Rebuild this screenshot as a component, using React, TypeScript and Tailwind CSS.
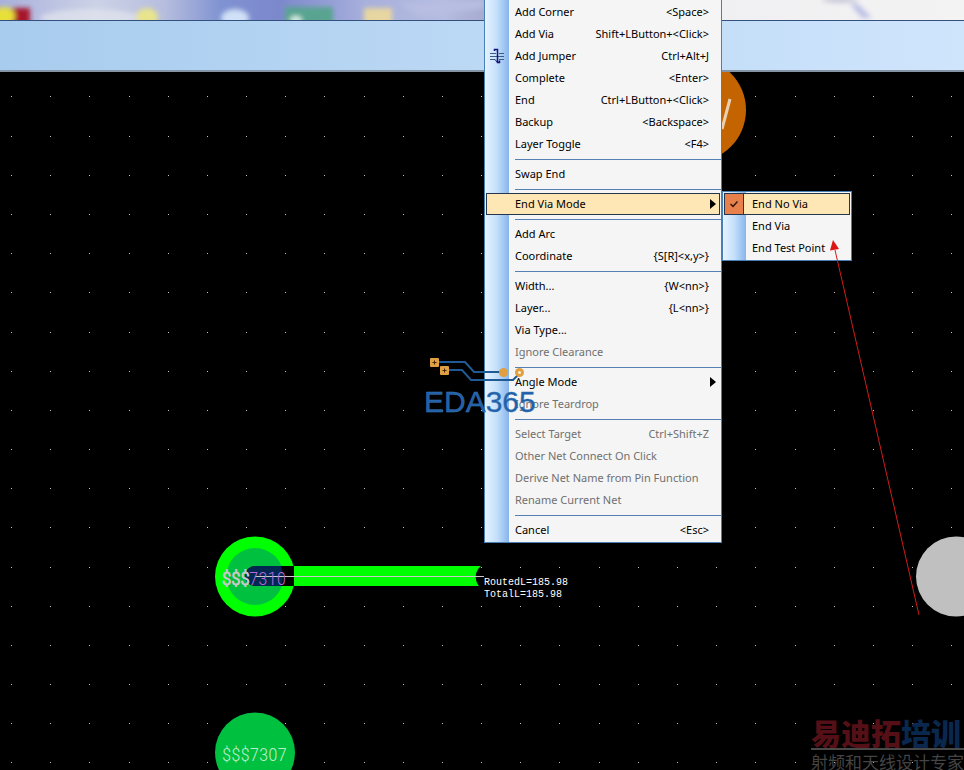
import { useState } from "react";

type MenuEntry = {
  label: string;
  shortcut?: string;
  disabled?: boolean;
  submenu?: boolean;
  icon?: "jumper";
};

const menuGroups: MenuEntry[][] = [
  [
    { label: "Add Corner", shortcut: "<Space>" },
    { label: "Add Via", shortcut: "Shift+LButton+<Click>" },
    { label: "Add Jumper", shortcut: "Ctrl+Alt+J", icon: "jumper" },
    { label: "Complete", shortcut: "<Enter>" },
    { label: "End", shortcut: "Ctrl+LButton+<Click>" },
    { label: "Backup", shortcut: "<Backspace>" },
    { label: "Layer Toggle", shortcut: "<F4>" },
  ],
  [{ label: "Swap End" }],
  [{ label: "End Via Mode", submenu: true }],
  [{ label: "Add Arc" }, { label: "Coordinate", shortcut: "{S[R]<x,y>}" }],
  [
    { label: "Width...", shortcut: "{W<nn>}" },
    { label: "Layer...", shortcut: "{L<nn>}" },
    { label: "Via Type..." },
    { label: "Ignore Clearance", disabled: true },
  ],
  [{ label: "Angle Mode", submenu: true }, { label: "Ignore Teardrop", disabled: true }],
  [
    { label: "Select Target", shortcut: "Ctrl+Shift+Z", disabled: true },
    { label: "Other Net Connect On Click", disabled: true },
    { label: "Derive Net Name from Pin Function", disabled: true },
    { label: "Rename Current Net", disabled: true },
  ],
  [{ label: "Cancel", shortcut: "<Esc>" }],
];

const viaModes = ["End No Via", "End Via", "End Test Point"];

const GRID = 39.17;

function JumperIcon() {
  return (
    <svg viewBox="0 0 16 16" className="absolute left-0.5 top-0.5 size-4" fill="none" stroke="#14147c">
      <path d="M1 5.500h6M1 8.500h14M1 11.500h5M10 5.500h5M10 11.500h5" stroke="#3a5a8c" />
      <path d="M5.500 3V1.500H8.500V14.500H10.500V12.500" strokeWidth="1.500" />
      <path d="M6 11.500L8.500 14.500" />
    </svg>
  );
}

function DesktopStrip() {
  return (
    <svg className="block h-5 w-full" viewBox="0 0 964 20" preserveAspectRatio="none">
      <defs>
        <linearGradient id="sky">
          <stop offset="0" stopColor="#a9b0dc" />
          <stop offset="0.1" stopColor="#ccd2e6" />
          <stop offset="0.17" stopColor="#b7bede" />
          <stop offset="0.23" stopColor="#7f92d2" />
          <stop offset="0.29" stopColor="#7c88cc" />
          <stop offset="0.38" stopColor="#a8b0dc" />
          <stop offset="0.46" stopColor="#b4bce0" />
          <stop offset="0.5" stopColor="#a8acd0" />
          <stop offset="0.75" stopColor="#f0f0f2" />
          <stop offset="1" stopColor="#f3f3f3" />
        </linearGradient>
        <filter id="soft" x="0" y="-20" width="964" height="60" filterUnits="userSpaceOnUse">
          <feGaussianBlur stdDeviation="2.500" />
        </filter>
      </defs>
      <rect width="964" height="20" fill="url(#sky)" />
      <g filter="url(#soft)">
        <ellipse cx="90" cy="18" rx="50" ry="9" fill="#e2e6ee" opacity="0.7" />
        <rect x="12" y="8" width="18" height="18" fill="#a8182c" />
        <ellipse cx="4" cy="16" rx="11" ry="9" fill="#e8e038" />
        <ellipse cx="147" cy="17" rx="11" ry="9" fill="#e8e48c" />
        <ellipse cx="235" cy="18" rx="14" ry="9" fill="#d0e0f6" />
        <rect x="285" y="7" width="48" height="20" fill="#58a490" />
        <ellipse cx="296" cy="20" rx="6" ry="4" fill="#d8f0e8" />
        <rect x="364" y="8" width="28" height="20" fill="#e8d6a0" />
        <path d="M400 4L484 0V8L420 16Z" fill="#b8bee2" />
        <ellipse cx="840" cy="0" rx="18" ry="3" fill="#c8c8d8" />
        <path d="M850 4l12 14h10l-14-14z" fill="#bcc0e4" />
      </g>
    </svg>
  );
}

function Board() {
  const columns = Array.from({ length: 60 }, (_, i) => Math.floor(11.6 + i * GRID));
  const rows = Array.from({ length: 40 }, (_, i) => Math.floor(24.99 + i * GRID));

  return (
    <svg className="absolute inset-0 size-full">
      <g fill="#c4c4c4" shapeRendering="crispEdges">
        {rows.map((y) => columns.map((x) => <rect key={`${x}-${y}`} x={x} y={y} width="1" height="1" />))}
      </g>

      <circle cx="694" cy="38" r="52" fill="#c46400" />
      <path d="M730 27L722 57" stroke="#e8d0b0" strokeWidth="3" />
      <circle cx="956" cy="504.500" r="40" fill="#c0c0c0" />

      <circle cx="255" cy="504.500" r="40" fill="#00ff00" />
      <circle cx="255" cy="504.500" r="28.500" fill="#00c040" />
      <path d="M294 494H255a10 10 0 0 0 0 20H294Z" fill="#000" />
      <path d="M281 494H255a10 10 0 0 0 0 20H281A28 28 0 0 0 281 494Z" fill="#002850" />
      <path d="M294 494H481a14 14 0 0 0 -2 20H294Z" fill="#00ff00" />
      <path d="M255 504.500H484" stroke="#c8c8c8" />
      <circle cx="255" cy="680.500" r="40" fill="#00c040" />

      <g className="font-['Roboto_Condensed',Roboto,sans-serif] text-[19px] font-light">
        <text x="222" y="513" fill="#c8c8c8" stroke="#c8c8c8">$$$</text>
        <text x="249" y="513" fill="#b468dc">7310</text>
        <text x="222" y="689" fill="#b8ecc4">$$$7307</text>
      </g>
      <g className="font-['Liberation_Mono',monospace] text-[10px]" fill="#fff">
        <text x="484" y="513">RoutedL=185.98</text>
        <text x="484" y="525">TotalL=185.98</text>
      </g>
    </svg>
  );
}

function MenuRow({ entry, active }: { entry: MenuEntry; active: boolean }) {
  return (
    <button
      type="button"
      role="menuitem"
      disabled={entry.disabled}
      aria-haspopup={entry.submenu ? "menu" : undefined}
      className={`relative flex h-[22px] items-center justify-between whitespace-nowrap border pl-7 ${
        entry.submenu ? "pr-[3px]" : "pr-2.5"
      } ${active ? "border-[#25364f] bg-[#ffe6b5]" : "border-transparent"} ${
        entry.disabled ? "text-[#707070]" : "text-black"
      }`}
    >
      {entry.icon && <JumperIcon />}
      <span>{entry.label}</span>
      {entry.shortcut && <span>{entry.shortcut}</span>}
      {entry.submenu && (
        <svg viewBox="0 0 6 10" className="h-2.5 w-1.5">
          <path d="M0 0L6 5L0 10Z" />
        </svg>
      )}
    </button>
  );
}

function ContextMenu() {
  return (
    <div
      role="menu"
      className="absolute left-[484px] top-0 flex w-[238px] flex-col border border-t-0 border-[#4a7fb5] bg-[#f5f5f5] bg-[linear-gradient(90deg,#e6f3ff,#c4dffa_50%,#86b5ec)] bg-[length:24px_100%] bg-no-repeat p-px"
    >
      {menuGroups.map((group, i) => (
        <div key={i} className="flex flex-col">
          {i > 0 && <div role="separator" className="-mr-px ml-[29px] mt-1 mb-[3px] h-px bg-[#5580b4]" />}
          {group.map((entry) => (
            <MenuRow key={entry.label} entry={entry} active={entry.label === "End Via Mode"} />
          ))}
        </div>
      ))}
    </div>
  );
}

function ViaModeMenu() {
  const [mode, setMode] = useState("End No Via");

  return (
    <div
      role="menu"
      className="absolute left-[722px] top-[191px] flex w-[130px] flex-col border border-[#4a7fb5] bg-[#f5f5f5] bg-[linear-gradient(90deg,#e6f3ff,#c4dffa_50%,#86b5ec)] bg-[length:23px_100%] bg-no-repeat p-px"
    >
      {viaModes.map((name) => (
        <button
          key={name}
          type="button"
          role="menuitemradio"
          aria-checked={mode === name}
          onClick={() => setMode(name)}
          className={`flex h-[22px] items-center gap-2 whitespace-nowrap border ${
            mode === name ? "border-[#25364f] bg-[#ffe6b5]" : "border-transparent"
          }`}
        >
          <span
            className={`flex h-full w-[19px] items-center justify-center ${
              mode === name ? "border-r border-[#25364f] bg-[#e8804c]" : ""
            }`}
          >
            {mode === name && (
              <svg viewBox="0 0 8 8" className="size-2" fill="none" stroke="#2c1410" strokeWidth="1.500">
                <path d="M0.500 4L3 6.500L7.500 1.500" />
              </svg>
            )}
          </span>
          <span>{name}</span>
        </button>
      ))}
    </div>
  );
}

function Annotations() {
  return (
    <svg className="pointer-events-none absolute inset-0 size-full">
      <path d="M835 250L919 615" stroke="#d01c1c" />
      <path d="M833 240L830 250.500L839 249Z" fill="#dc1414" />

      <g fill="none" stroke="#1f5a94" strokeWidth="2">
        <path d="M439 362H465L474 372H500" />
        <path d="M449 370H462L471 380H513L518 375" />
      </g>
      <g fill="#e0a040">
        <rect x="430" y="358" width="9" height="9" rx="1" />
        <rect x="440" y="366" width="9" height="9" rx="1" />
        <circle cx="503.500" cy="372.500" r="4.500" />
        <circle cx="519.500" cy="372.500" r="4.500" />
      </g>
      <circle cx="519.500" cy="372.500" r="1.500" fill="#fff0d0" />
      <path d="M432.500 362.500h4M434.500 360.500v4M442.500 370.500h4M444.500 368.500v4" stroke="#40280c" />
      <text
        x="424"
        y="412"
        className="font-['Liberation_Sans',sans-serif] text-[30px]"
        fill="#2260a8"
        stroke="#3c78b8"
        strokeWidth="0.400"
      >
        EDA365
      </text>
    </svg>
  );
}

function TrainingMark() {
  return (
    <div className="pointer-events-none absolute -bottom-1 right-0 flex flex-col whitespace-nowrap font-['Noto_Sans_CJK_SC',sans-serif]">
      <div className="text-[30px] font-black leading-8 text-[#541016]">
        易迪拓<span className="text-[#0a284e]">培训</span>
      </div>
      <div className="border-t-2 border-[#484848] text-[17px] leading-6 text-[#444]">射频和天线设计专家</div>
    </div>
  );
}

export default function App() {
  return (
    <div className="relative flex min-h-screen flex-col overflow-hidden bg-black font-['Noto_Sans','Open_Sans',sans-serif] text-[11px] leading-4">
      <DesktopStrip />
      <div className="h-[52px] border-t border-b-2 border-t-[#34507c] border-b-[#8494a4] bg-linear-to-r from-[#a8ccee] to-[#cfe5fc]" />
      <main className="relative flex-1 overflow-hidden">
        <Board />
        <TrainingMark />
      </main>
      <ContextMenu />
      <ViaModeMenu />
      <Annotations />
    </div>
  );
}
